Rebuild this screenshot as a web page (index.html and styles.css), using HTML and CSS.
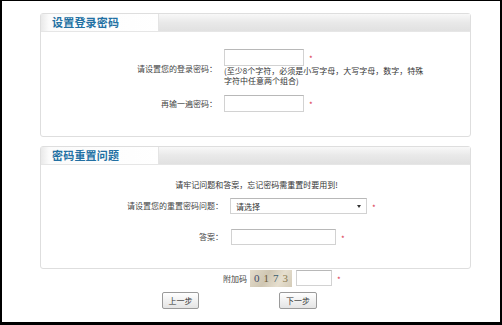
FILE: index.html
```html
<!DOCTYPE html>
<html lang="zh-CN">
  <head>
    <meta charset="UTF-8" />
    <meta name="viewport" content="width=device-width, initial-scale=1.0" />
    <title>设置密码</title>
    <link rel="stylesheet" href="styles.css">
  </head>
  <body>
    <div class="frame">
      <div class="panel panel-login">
        <div class="panel-head">
          <span class="panel-tab">设置登录密码</span>
        </div>
        <div class="panel-body form-grid">
          <label class="form-label label-pwd">请设置您的登录密码：</label>
          <div class="form-field">
            <div class="field-line">
              <input type="password" class="text-input input-pwd" />
              <span class="req">*</span>
            </div>
            <div class="hint">(至少8个字符，必须是小写字母，大写字母，数字，特殊<br>字符中任意两个组合)</div>
          </div>
          <label class="form-label">再输一遍密码：</label>
          <div class="form-field">
            <div class="field-line">
              <input type="password" class="text-input input-pwd" />
              <span class="req">*</span>
            </div>
          </div>
        </div>
      </div>

      <div class="panel panel-question">
        <div class="panel-head">
          <span class="panel-tab">密码重置问题</span>
        </div>
        <div class="panel-body">
          <p class="notice">请牢记问题和答案，忘记密码需重置时要用到!</p>
          <div class="form-grid grid-wide">
            <label class="form-label">请设置您的重置密码问题：</label>
            <div class="field-line">
              <span class="select-wrap">
                <select class="select-box">
                  <option>请选择</option>
                </select>
              </span>
              <span class="req">*</span>
            </div>
            <label class="form-label">答案：</label>
            <div class="field-line">
              <input type="text" class="text-input input-answer" />
              <span class="req">*</span>
            </div>
          </div>
        </div>
      </div>

      <div class="captcha-row">
        <span class="captcha-label">附加码</span>
        <span class="captcha-img"><b class="d1">0</b><b class="d2">1</b><b class="d3">7</b><b class="d4">3</b></span>
        <input type="text" class="text-input input-captcha" />
        <span class="req">*</span>
      </div>

      <div class="button-row">
        <button class="btn">上一步</button>
        <button class="btn btn-next">下一步</button>
      </div>
    </div>
  </body>
</html>
```

FILE: styles.css
```css
body {
  margin: 0;
  padding: 0;
  background-color: #fff;
  font-family: "Noto Sans CJK SC", "Liberation Sans", sans-serif;
  font-size: 8px;
  color: #333;
}
.frame {
  width: 502px;
  height: 325px;
  box-sizing: border-box;
  border-style: solid;
  border-color: #000;
  border-width: 1px 2px 3px 2px;
  overflow: hidden;
}
.panel {
  width: 431px;
  box-sizing: border-box;
  margin-left: 38px;
  border: 1px solid #dedede;
  border-radius: 3px;
  background-color: #fff;
}
.panel-login {
  margin-top: 12px;
}
.panel-question {
  margin-top: 9px;
}
.panel-head {
  height: 17px;
  display: flex;
  border-bottom: 1px solid #e6e6e6;
  background: linear-gradient(#f8f8f8, #e9e9e9 50%, #e1e1e1);
}
.panel-tab {
  width: 106px;
  padding-left: 11px;
  border-right: 1px solid #e4e4e4;
  background: linear-gradient(90deg, #e9e9e9, #fbfbfb 8px, #fff);
  color: #2270a3;
  font-size: 11px;
  font-weight: bold;
  line-height: 17px;
  letter-spacing: 0.2px;
}
.panel-login .panel-body {
  padding: 17px 0 24px 0;
}
.panel-question .panel-body {
  padding: 15px 0 23px 0;
}
.form-grid {
  display: grid;
  grid-template-columns: 176px 1fr;
  column-gap: 7px;
  row-gap: 9px;
}
.grid-wide {
  grid-template-columns: 182px 1fr;
  row-gap: 15px;
}
.form-label {
  align-self: center;
  text-align: right;
  color: #444;
  line-height: 10px;
}
.label-pwd {
  margin-top: 3px;
}
.field-line {
  display: flex;
  align-items: center;
  gap: 5px;
}
.text-input {
  box-sizing: border-box;
  margin: 0;
  padding: 0 3px;
  border: 1px solid #d2d2d2;
  border-top-color: #b8b8b8;
  background-color: #fff;
  font-family: inherit;
  font-size: 8px;
}
.input-pwd {
  width: 80px;
  height: 17px;
}
.input-answer {
  width: 105px;
  height: 16px;
  margin-left: 1px;
}
.hint {
  line-height: 10px;
  color: #333;
}
.req {
  color: #d9344c;
  font-size: 8px;
  line-height: 8px;
  margin-top: 3px;
}
.notice {
  margin: 0 0 8px 0;
  text-align: center;
  line-height: 10px;
  padding-left: 2px;
}
.select-wrap {
  position: relative;
  display: inline-block;
}
.select-wrap::after {
  content: "";
  position: absolute;
  right: 6px;
  top: 7px;
  border-left: 2px solid transparent;
  border-right: 2px solid transparent;
  border-top: 3px solid #333;
}
.select-box {
  appearance: none;
  -webkit-appearance: none;
  width: 137px;
  height: 16px;
  margin: 0;
  padding: 0 5px;
  border: 1px solid #d2d2d2;
  border-top-color: #b8b8b8;
  border-radius: 0;
  background-color: #fff;
  font-family: inherit;
  font-size: 8px;
  color: #333;
}
.captcha-row {
  display: flex;
  align-items: center;
  height: 18px;
  margin-left: 221px;
}
.captcha-label {
  color: #444;
  margin-right: 3px;
}
.captcha-img {
  width: 42px;
  height: 17px;
  display: flex;
  align-items: center;
  justify-content: space-evenly;
  margin-right: 4px;
  background: linear-gradient(120deg, #e4dccb, #cfc6b2 40%, #e6dfcf 70%, #d4cbb7);
  font-family: "Liberation Serif", serif;
  font-size: 11px;
}
.captcha-img b {
  font-weight: normal;
}
.d1 { color: #3d4a6b; }
.d2 { color: #6b5a3a; }
.d3 { color: #3b5d6e; }
.d4 { color: #8a7a4e; }
.input-captcha {
  width: 36px;
  height: 16px;
  margin-right: 5px;
}
.button-row {
  display: flex;
  gap: 80px;
  margin: 5px 0 0 160px;
}
.btn {
  width: 37px;
  height: 17px;
  margin: 0;
  padding: 0;
  border: 1px solid #9a9a9a;
  border-radius: 2px;
  background: linear-gradient(#ffffff, #e4e4e4);
  font-family: inherit;
  font-size: 8px;
  color: #333;
}
.btn-next {
  width: 38px;
}
```
